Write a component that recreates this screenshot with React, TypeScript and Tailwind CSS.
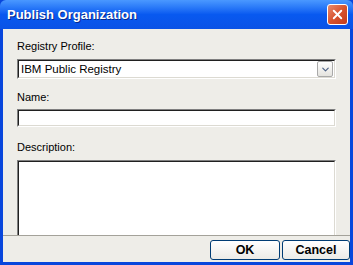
import { ChevronDown, X } from 'lucide-react';

const ui = { fontFamily: '"Liberation Sans", Arial, sans-serif' };

function Sunken({ className, children }: { className: string; children?: React.ReactNode }) {
  return (
    <div className={`border border-t-[#7f7f7f] border-l-[#7f7f7f] border-r-white border-b-white ${className}`}>
      <div className="h-full border border-t-[#202020] border-l-[#202020] border-r-[#dcdad2] border-b-[#dcdad2] bg-white">
        {children}
      </div>
    </div>
  );
}

function XpButton({ label, className }: { label: string; className: string }) {
  return (
    <button
      className={`h-[20px] rounded-[3px] border border-[#003c74] bg-gradient-to-b from-white to-[#ecebe6] text-[12.5px] font-bold text-black ${className}`}
    >
      {label}
    </button>
  );
}

export default function App() {
  return (
    <div className="w-[353px] h-[265px] flex flex-col overflow-hidden bg-[#0846dc]" style={ui}>
      {/* title bar */}
      <div className="h-[29px] shrink-0 flex items-center justify-between pl-[7px] pr-[5px] bg-gradient-to-b from-[#4a98ff] via-[#0859f0] to-[#0a52e6] rounded-t-[6px]">
        <span className="text-[13px] font-bold text-white [text-shadow:1px_1px_0_#0a2a8a]">
          Publish Organization
        </span>
        <div className="w-[21px] h-[21px] rounded-[3px] border border-white bg-gradient-to-br from-[#e88a6c] via-[#d8532e] to-[#c23b1a] flex items-center justify-center">
          <X size={15} strokeWidth={3} className="text-white" />
        </div>
      </div>

      {/* body */}
      <div className="flex-1 min-h-0 mx-[3px] bg-[#eeede8] flex flex-col overflow-hidden">
        <div className="flex-1 min-h-0 px-[14px] pt-[11px] flex flex-col text-[11px] leading-[13px] text-black">
          <div className="h-[13px]">Registry Profile:</div>
          <Sunken className="mt-[6px] h-[20px] shrink-0">
            <div className="h-full flex items-center justify-between pl-[2px] pr-[1px]">
              <span className="text-[11.5px]">IBM Public Registry</span>
              <div className="w-[16px] h-[16px] border border-[#a9a9a9] rounded-[2px] bg-gradient-to-b from-white to-[#e4e3de] flex items-center justify-center">
                <ChevronDown size={11} strokeWidth={2.5} className="text-[#4d6185]" />
              </div>
            </div>
          </Sunken>
          <div className="h-[13px] mt-[12px]">Name:</div>
          <Sunken className="mt-[5px] h-[18px] shrink-0" />
          <div className="h-[13px] mt-[14px]">Description:</div>
          <Sunken className="mt-[6px] h-[120px] shrink-0" />
        </div>

        {/* button bar */}
        <div className="h-[27px] shrink-0 border-t border-[#a4a29a] bg-[#eeede8] flex items-center justify-end gap-[2px] pt-[1px]">
          <XpButton label="OK" className="w-[70px]" />
          <XpButton label="Cancel" className="w-[68px]" />
        </div>
      </div>
      <div className="h-[3px] shrink-0" />
    </div>
  );
}
